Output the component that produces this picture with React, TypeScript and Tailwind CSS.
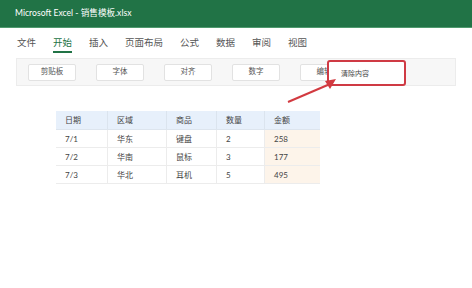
export default function App() {
  const tabs = ["文件", "开始", "插入", "页面布局", "公式", "数据", "审阅", "视图"];
  const groups = ["剪贴板", "字体", "对齐", "数字", "编辑"];
  const rows = [
    ["7/1", "华东", "键盘", "2", "258"],
    ["7/2", "华南", "鼠标", "3", "177"],
    ["7/3", "华北", "耳机", "5", "495"],
  ];
  const widths = ["w-[52px]", "w-[59px]", "w-[50px]", "w-[48px]", "w-[55px]"];
  const cjk = { fontFamily: "Lato, 'Noto Sans CJK SC', sans-serif" };

  return (
    <div className="relative w-[472px] h-[288px] overflow-hidden bg-white text-[#333]" style={cjk}>
      {/* Title bar */}
      <div className="h-[28px] bg-[#217346] border-b border-[#4f9a6e] flex items-center pl-[15px] text-[8.6px] text-white">
        Microsoft Excel - 销售模板.xlsx
      </div>

      {/* Tabs */}
      <div className="h-[30px] flex items-center pl-[17px] gap-[17px] text-[9.5px] text-[#555]">
        {tabs.map((t) => (
          <div key={t} className={"relative " + (t === "开始" ? "text-[#217346]" : "")}>
            {t}
            {t === "开始" && <div className="absolute left-0 right-0 top-[15px] h-[2px] bg-[#217346]" />}
          </div>
        ))}
      </div>

      {/* Ribbon */}
      <div className="ml-[16px] w-[440px] h-[28px] bg-[#f7f7f7] border border-[#ececec] flex items-center pl-[11px] gap-[20px]">
        {groups.map((g) => (
          <div
            key={g}
            className="w-[48px] h-[17px] bg-white border border-[#e2e2e2] rounded-[2px] flex items-center justify-center text-[7.5px] text-[#555]"
          >
            {g}
          </div>
        ))}
      </div>

      {/* Highlight */}
      <div className="absolute left-[327px] top-[60px] w-[79px] h-[26px] bg-white border-2 border-[#cf3a44] rounded-[3px] flex items-center pl-[12px] text-[7px] text-[#444]">
        清除内容
      </div>

      {/* Arrow */}
      <svg className="absolute left-0 top-0" width="472" height="288">
        <line x1="288" y1="102" x2="330" y2="84" stroke="#d23a40" strokeWidth="2" />
        <polygon points="336,79 325,81 330,89" fill="#d23a40" />
      </svg>

      {/* Table */}
      <div className="ml-[56px] mt-[25px] w-[264px] text-[8px] text-[#444]">
        <div className="flex h-[19px] bg-[#e7f0fb] border-b border-[#dde5ee]">
          {["日期", "区域", "商品", "数量", "金额"].map((h, i) => (
            <div
              key={h}
              className={widths[i] + " flex items-center pl-[9px] " + (i < 4 ? "border-r border-[#dbe4ee]" : "")}
            >
              {h}
            </div>
          ))}
        </div>
        {rows.map((r) => (
          <div key={r[0]} className="flex h-[18px] border-b border-[#ececec]">
            {r.map((c, i) => (
              <div
                key={i}
                className={
                  widths[i] +
                  " flex items-center pl-[9px] " +
                  (i < 4 ? "border-r border-[#ececec] " : "bg-[#fdf4ea]")
                }
              >
                {c}
              </div>
            ))}
          </div>
        ))}
      </div>
    </div>
  );
}
